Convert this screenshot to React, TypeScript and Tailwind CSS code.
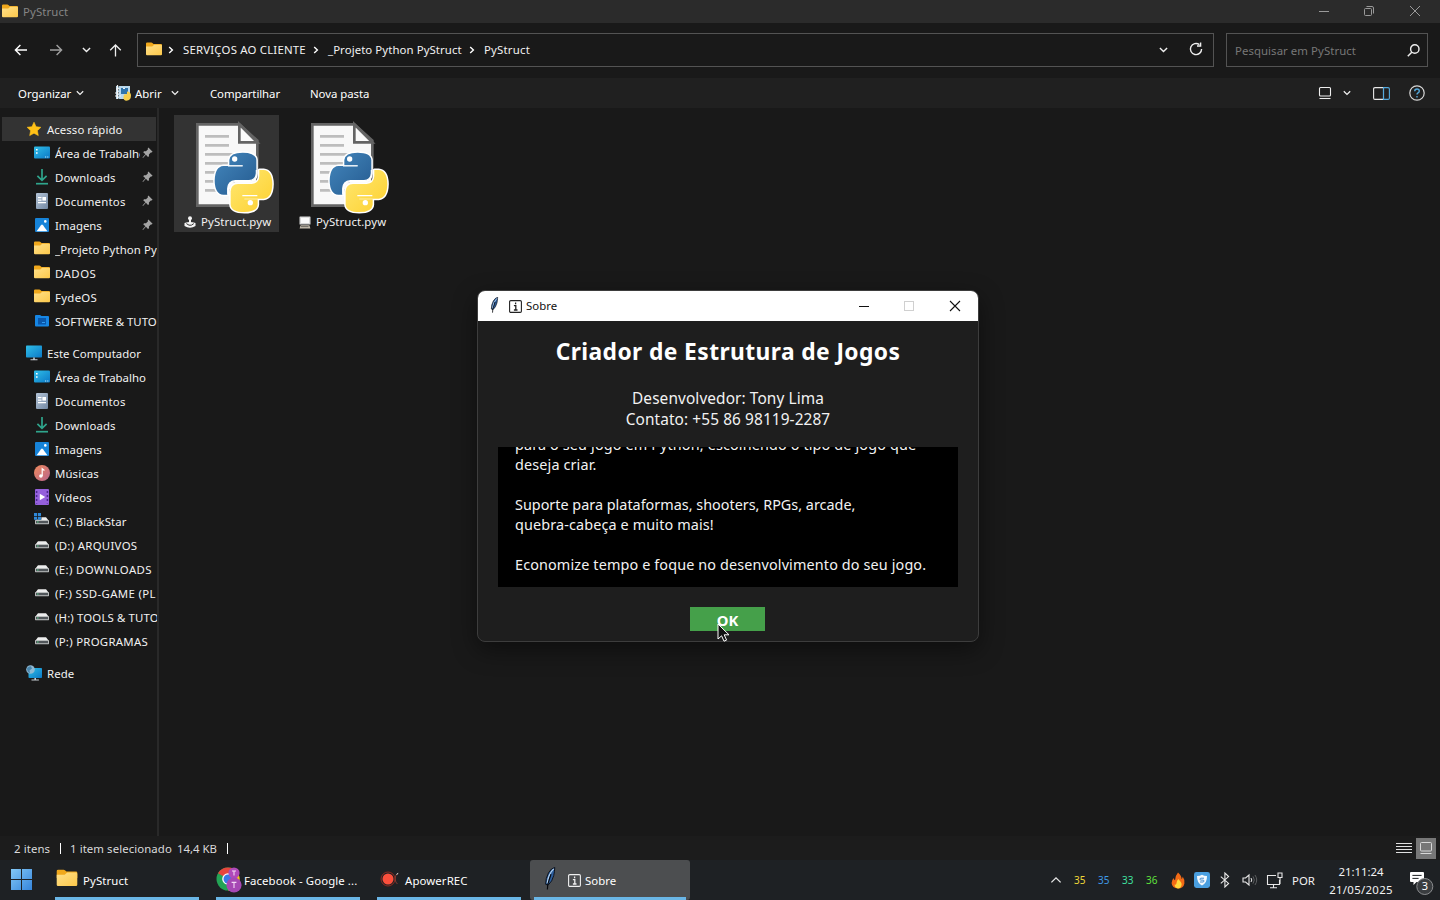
import React from "react";

type P = { children?: React.ReactNode; w: number; h: number; vb?: string; className?: string };
const Svg = ({ children, w, h, vb, className = "" }: P) => (
  <svg width={w} height={h} viewBox={vb ?? `0 0 ${w} ${h}`} fill="none" className={`shrink-0 ${className}`}>
    {children}
  </svg>
);

const Folder = ({ w = 16, h = 14 }: { w?: number; h?: number }) => (
  <Svg w={w} h={h} vb="0 0 16 14" className="mb-[2px]">
    <defs>
      <linearGradient id="fold" x1="0" y1="0" x2="1" y2="1">
        <stop offset="0" stopColor="#ffe08a" />
        <stop offset="1" stopColor="#fcc84a" />
      </linearGradient>
    </defs>
    <path d="M0 1.6Q0 .5 1.1.5H5.4Q6 .5 6.4.9L7.6 2H15Q16 2 16 3V7H0Z" fill="#f0a81c" />
    <path d="M0 4.4H6.2L8.2 2.8H15Q16 2.8 16 3.8V12.2Q16 13.3 15 13.3H1Q0 13.3 0 12.2Z" fill="url(#fold)" />
  </Svg>
);

const Chevron = ({ w = 9, className = "" }: { w?: number; className?: string }) => (
  <Svg w={w} h={6} vb="0 0 9 6" className={className}>
    <path d="M.9 1.1L4.5 4.6L8.1 1.1" stroke="#f0f0f0" strokeWidth="1.4" />
  </Svg>
);

const Crumb = ({ className = "" }: { className?: string }) => (
  <Svg w={6} h={8} className={className}>
    <path d="M1.2 1L4.4 4L1.2 7" stroke="#fff" strokeWidth="1.4" />
  </Svg>
);

const Desktop = () => (
  <Svg w={16} h={16}>
    <defs>
      <linearGradient id="desk" x1="0" y1="0" x2="1" y2="1">
        <stop offset="0" stopColor="#30bfe8" />
        <stop offset="1" stopColor="#0b78c6" />
      </linearGradient>
    </defs>
    <rect x="0" y="1.5" width="16" height="12" rx="1" fill="url(#desk)" />
    <path d="M2 4h1.6v1.6H2zM2 7.2h1.6v1.6H2z" fill="#fff" />
    <path d="M11 12h1.2M13.2 12h1.2" stroke="#bfe6fb" strokeWidth="1" />
  </Svg>
);
const Download = () => (
  <Svg w={16} h={16}>
    <path d="M8 0V11M3.4 6.8L8 11.3L12.6 6.8" stroke="#2fa58c" strokeWidth="1.7" />
    <path d="M2 14.7H14" stroke="#2fa58c" strokeWidth="1.7" />
  </Svg>
);
const Doc = () => (
  <Svg w={16} h={16}>
    <defs>
      <linearGradient id="doc" x1="0" y1="0" x2="1" y2="1">
        <stop offset="0" stopColor="#b5c5d8" />
        <stop offset="1" stopColor="#7388a3" />
      </linearGradient>
    </defs>
    <rect x="2" y="0" width="12" height="16" rx="1" fill="url(#doc)" />
    <path d="M4 4.7H7.5M4 7.2H7.5M4 9.7H12" stroke="#fff" strokeWidth="1.2" />
    <rect x="8.4" y="4" width="3.6" height="3.6" fill="#fff" />
  </Svg>
);
const Picture = () => (
  <Svg w={16} h={16}>
    <rect x="1" y="1" width="14" height="14" rx="1" fill="#1683d8" />
    <path d="M2.6 14.2L7 8.2Q8 7 9 8.2L13.4 14.2Z" fill="#fff" />
    <circle cx="11.3" cy="4.4" r="1.3" fill="#fff" />
  </Svg>
);
const BlueFolder = () => (
  <Svg w={16} h={16}>
    <path d="M1 3Q1 2 2 2H6L7.5 3H14Q15 3 15 4V12.5Q15 13.5 14 13.5H2Q1 13.5 1 12.5Z" fill="#1686e4" />
    <rect x="4" y="5" width="8" height="6.5" fill="#0a57ab" />
    <path d="M8 9.5h3" stroke="#2f9bf0" />
  </Svg>
);
const Monitor = () => (
  <Svg w={16} h={16}>
    <rect x="0" y=".5" width="16" height="12" rx=".8" fill="url(#desk)" />
    <path d="M7.2 12.5h1.6v2H7.2zM4.5 14.3h7v1h-7z" fill="#c5ccd2" />
  </Svg>
);
const Network = () => (
  <Svg w={16} h={16}>
    <rect x="2.5" y="3" width="13.5" height="10" rx=".8" fill="url(#desk)" />
    <path d="M8.4 13h1.6v2H8.4zM5.5 14.6h7.4v1H5.5z" fill="#c5ccd2" />
    <circle cx="4.5" cy="4.5" r="4.3" fill="#8fb9d3" />
    <path d="M1 3Q3 1 5 1.4L6 3.5L3.5 5.5L4 8Q1 7.5 1 3Z" fill="#4b86ad" />
  </Svg>
);
const Music = () => (
  <Svg w={16} h={16}>
    <defs>
      <linearGradient id="mus" x1="0" y1="0" x2="1" y2="1">
        <stop offset="0" stopColor="#f08b5c" />
        <stop offset="1" stopColor="#b8648c" />
      </linearGradient>
    </defs>
    <circle cx="8" cy="8" r="8" fill="url(#mus)" />
    <path d="M8.2 11V3.8L10.4 5.5" stroke="#fff" strokeWidth="1.2" />
    <circle cx="6.9" cy="11" r="1.8" fill="#fff" />
  </Svg>
);
const Video = () => (
  <Svg w={16} h={16}>
    <rect x="1" y="0" width="14" height="16" rx="1" fill="#9560dc" />
    <path d="M2.6 2v12.5M13.4 2v12.5" stroke="#4c2790" strokeWidth="1.5" strokeDasharray="2 2" />
    <path d="M5.8 4.8L11.2 8L5.8 11.2Z" fill="#fff" />
  </Svg>
);
const Drive = ({ win = false }: { win?: boolean }) => (
  <Svg w={16} h={16}>
    <path d="M4 4.2H12L14.6 7.6H1.4Z" fill="#eceded" />
    <rect x="1" y="7" width="14" height="4.2" rx=".6" fill="#b9bcbc" />
    <rect x="2" y="8" width="12" height="2.2" fill="#51565a" />
    <path d="M3 9h1.6" stroke="#59d08a" />
    {win && (
      <g>
        <rect x="-1" y="-1" width="8.4" height="7.6" fill="#191919" />
        <path d="M0 0h3.1v3H0zM3.9 0H7v3H3.9zM0 3.7h3.1v3H0zM3.9 3.7H7v3H3.9z" fill="#2f88d8" />
      </g>
    )}
  </Svg>
);
const Star = () => (
  <Svg w={16} h={16}>
    <path
      d="M8 1.2L10.1 5.7L14.9 6.3L11.4 9.7L12.3 14.6L8 12.2L3.7 14.6L4.6 9.7L1.1 6.3L5.9 5.7Z"
      fill="#ffc117"
      stroke="#ffc117"
      strokeWidth=".6"
      strokeLinejoin="round"
    />
  </Svg>
);
const Pin = () => (
  <Svg w={11} h={12}>
    <path d="M6.4 .6L10.6 4.8L9.6 5.6L8.8 5.4L6.9 7.4L7 9.2L6 10L3.9 7.8L1 10.9L.5 10.4L3.4 7.3L1.2 5.2L2.1 4.2L4 4.2L6 2.3L5.7 1.4Z" fill="#a4a4a4" />
  </Svg>
);

const SnakeHalf = ({ fill, outline }: { fill: string; outline?: boolean }) => (
  <path
    d="M178 166V150Q180 128 218 128Q257 128 259 150V190Q258 211 237 212H196Q174 214 173 236V254H160Q135 252 134 212Q135 170 160 168H218V166Z"
    fill={outline ? "#fff" : fill}
    stroke={outline ? "#fff" : "none"}
    strokeWidth={outline ? 9 : 0}
    strokeLinejoin="round"
  />
);

const PyFile = () => (
  <Svg w={84} h={94} vb="66 30 252 282">
    <defs>
      <linearGradient id="pyb" x1="0" y1="0" x2="1" y2="1">
        <stop offset="0" stopColor="#4487bd" />
        <stop offset="1" stopColor="#245a8f" />
      </linearGradient>
      <linearGradient id="pyy" x1="1" y1="1" x2="0" y2="0">
        <stop offset="0" stopColor="#ffe873" />
        <stop offset="1" stopColor="#fdd02e" />
      </linearGradient>
    </defs>
    <path d="M82 43H208L262 92V287H82Z" fill="#f8f8f8" stroke="#646464" strokeWidth="8" />
    <path d="M208 43V97H262Z" fill="#fafafa" stroke="#646464" strokeWidth="8" />
    <path
      d="M105 79H177M105 106H177M105 133H195M105 160H195M105 187H195M105 214H195M105 241H195"
      stroke="#bdbdbd"
      strokeWidth="8"
    />
    <SnakeHalf fill="" outline />
    <g transform="rotate(180 220.5 217)">
      <SnakeHalf fill="" outline />
    </g>
    <SnakeHalf fill="url(#pyb)" />
    <g transform="rotate(180 220.5 217)">
      <SnakeHalf fill="url(#pyy)" />
    </g>
    <path d="M174 168H218M217 257H262" stroke="#fff" strokeWidth="3.5" />
    <path d="M173 254V236Q174 214 196 212H237Q258 211 259 190V180" stroke="#fff" strokeWidth="3.5" />
    <circle cx="194" cy="147" r="8" fill="#fff" />
    <circle cx="241" cy="278" r="8" fill="#fff" />
  </Svg>
);

const Feather = ({ w, h }: { w: number; h: number }) => (
  <Svg w={w} h={h} vb="0 0 12 24">
    <path d="M11.5 .5Q8 1 5 6Q1.8 12 2 18L4.5 19Q9 15 10.4 9Q11.3 5 11.5 .5Z" fill="#2d5f9e" stroke="#0a0f18" strokeWidth="1" />
    <path d="M10.4 2Q5 7 3.6 17" stroke="#b8d4f0" strokeWidth="1.3" />
    <path d="M7.6 7.5L4.2 18L3.8 23.5" stroke="#07090d" strokeWidth="1.2" />
  </Svg>
);

const InfoBox = ({ color, w = 13 }: { color: string; w?: number }) => (
  <Svg w={w} h={w} vb="0 0 13 13">
    <rect x=".6" y=".6" width="11.8" height="11.8" rx="1.2" stroke={color} strokeWidth="1.1" />
    <path d="M6.6 2.6V4.2M4.9 5.6H6.8V10M4.9 10H8.5" stroke={color} strokeWidth="1.3" />
  </Svg>
);

type Row = { icon: React.ReactNode; label: string; pin?: boolean; cls?: string };
const quick: Row[] = [
  { icon: <Desktop />, label: "Área de Trabalho", pin: true },
  { icon: <Download />, label: "Downloads", pin: true, cls: "tracking-[0.1px]" },
  { icon: <Doc />, label: "Documentos", pin: true, cls: "tracking-[0.24px]" },
  { icon: <Picture />, label: "Imagens", pin: true },
  { icon: <Folder />, label: "_Projeto Python Py", cls: "tracking-[0.1px]" },
  { icon: <Folder />, label: "DADOS", cls: "tracking-[0.5px]" },
  { icon: <Folder />, label: "FydeOS", cls: "tracking-[0.3px]" },
  { icon: <BlueFolder />, label: "SOFTWERE & TUTO" },
];
const computer: Row[] = [
  { icon: <Desktop />, label: "Área de Trabalho" },
  { icon: <Doc />, label: "Documentos", cls: "tracking-[0.24px]" },
  { icon: <Download />, label: "Downloads", cls: "tracking-[0.1px]" },
  { icon: <Picture />, label: "Imagens" },
  { icon: <Music />, label: "Músicas", cls: "tracking-[0.1px]" },
  { icon: <Video />, label: "Vídeos", cls: "tracking-[0.25px]" },
  { icon: <Drive win />, label: "(C:) BlackStar", cls: "tracking-[0.13px]" },
  { icon: <Drive />, label: "(D:) ARQUIVOS", cls: "tracking-[0.3px]" },
  { icon: <Drive />, label: "(E:) DOWNLOADS", cls: "tracking-[0.36px]" },
  { icon: <Drive />, label: "(F:) SSD-GAME (PL", cls: "tracking-[0.36px]" },
  { icon: <Drive />, label: "(H:) TOOLS & TUTO", cls: "tracking-[0.15px]" },
  { icon: <Drive />, label: "(P:) PROGRAMAS", cls: "tracking-[0.28px]" },
];

const Item = ({ icon, label, pin, cls = "" }: Row) => (
  <div className="flex h-6 items-center pl-[34px]">
    {icon}
    <span className={`ml-[5px] overflow-hidden whitespace-nowrap pt-[2px] leading-[22px] ${pin ? "w-[85px]" : "w-[102px]"} ${cls}`}>{label}</span>
    {pin && <span className="ml-[2px]"><Pin /></span>}
  </div>
);
const Head = ({ icon, label, active }: { icon: React.ReactNode; label: string; active?: boolean }) => (
  <div className={`ml-[2px] flex h-6 w-[154px] items-center pl-6 ${active ? "bg-[#333333]" : ""}`}>
    {icon}
    <span className="ml-[5px] whitespace-nowrap pt-[2px] tracking-[0.06px]">{label}</span>
  </div>
);

const Joystick = () => (
  <Svg w={12} h={12}>
    <circle cx="6" cy="2.2" r="2" fill="#f4f4f4" />
    <path d="M6 3V7.5" stroke="#f4f4f4" strokeWidth="2" />
    <path d="M.5 7Q6 5 11.5 7V10Q6 13.6 .5 10Z" fill="#f4f4f4" />
    <path d="M2.4 7.6L5 9.2H7.4L9.8 7.6" stroke="#333" />
  </Svg>
);
const OldPc = () => (
  <Svg w={12} h={13}>
    <rect x=".5" y=".5" width="11" height="8" rx=".6" fill="#d8d8d8" />
    <rect x="2" y="1.8" width="8" height="5.2" fill="#fafafa" />
    <path d="M1.6 9.2H10.4L11.4 12.5H.6Z" fill="#c4bcae" />
    <path d="M2 10.6h7.5" stroke="#6e6a64" />
  </Svg>
);

const Task = ({ icon, label, cls = "", txt = "" }: { icon: React.ReactNode; label: string; cls?: string; txt?: string }) => (
  <div className={`flex h-10 items-center border-b-[3px] border-[#6ab6e6] ${cls}`}>
    {icon}
    <span className={`whitespace-nowrap pt-[5px] text-white ${txt}`}>{label}</span>
  </div>
);

const Chrome = () => (
  <Svg w={27} h={26}>
    <circle cx="12" cy="12" r="11.5" fill="#23a455" />
    <path d="M12 12L2 6.2A11.5 11.5 0 0 1 22 6.2Z" fill="#e8453c" />
    <path d="M12 23.5A11.5 11.5 0 0 0 22 6.2H12L17 15Z" fill="#fbc116" />
    <circle cx="12" cy="12" r="5.8" fill="#fff" />
    <circle cx="12" cy="12" r="4.5" fill="#3b78e7" />
    <circle cx="18" cy="6" r="5.6" fill="#b04aba" />
    <circle cx="18" cy="18" r="7.6" fill="#a648b4" />
    <path d="M16 4h4M18 4v4.4M15.6 15.4h4.8M18 15.4v5.6" stroke="#f3d8f5" strokeWidth="1.1" />
  </Svg>
);

const Rec = () => (
  <Svg w={20} h={18}>
    <circle cx="8" cy="9" r="7" stroke="#a82c20" strokeWidth=".8" />
    <circle cx="8" cy="9" r="5.5" fill="#fb4f3c" />
    <path d="M17.4 3.8Q15 5.4 15.2 9T17.4 14" stroke="#8e3c32" strokeWidth=".9" />
    <path d="M16.5 4.4L18.2 3.4" stroke="#eee" />
  </Svg>
);

const Flame = () => (
  <Svg w={14} h={17}>
    <path d="M7 .5Q11 4 10.4 7Q11.8 6.4 11.7 4.6Q14 8 13.4 11.4Q12.4 16.5 7 16.5Q1 16.4 .6 11Q.6 8.4 2.6 6Q3 8 4 8.2Q4 4 7 .5Z" fill="#f26a16" />
    <path d="M7.2 7Q11 10.4 10.6 12.8Q10 16.4 7 16.4Q3.6 16 3.6 12.6Q5 13 5.4 11.4Q5.6 9 7.2 7Z" fill="#ffd83c" />
  </Svg>
);

export default function App() {
  return (
    <div className="relative flex h-[900px] w-[1440px] flex-col overflow-hidden bg-[#191919] font-['Noto_Sans',sans-serif] text-[11.4px] text-[#f2f2f2]">
      {/* window title bar */}
      <header className="flex h-[23px] items-center bg-[#2b2b2b] pl-[2px] text-[#858585]">
        <Folder />
        <span className="ml-[5px] tracking-[0.1px]">PyStruct</span>
        <div className="ml-auto flex h-full items-center pr-[18px]">
          <Svg w={12} h={12} className="mb-[2px] mr-[33px]">
            <path d="M1 6.5H11" stroke="#9a9a9a" />
          </Svg>
          <Svg w={12} h={12} className="mb-[2px] mr-[33px]">
            <rect x="1.5" y="3.5" width="7" height="7" rx="1" stroke="#9a9a9a" />
            <path d="M3.5 1.5H9Q10.5 1.5 10.5 3V8.5" stroke="#9a9a9a" />
          </Svg>
          <Svg w={14} h={12} className="mb-[2px]">
            <path d="M2 1L12 11M12 1L2 11" stroke="#9a9a9a" />
          </Svg>
        </div>
      </header>

      {/* navigation */}
      <nav className="flex h-[55px] items-start pt-[10px]">
        <div className="flex h-[34px] w-[137px] items-center pl-[14px]">
          <Svg w={14} h={12}>
            <path d="M13 6H1.6M6.4 1L1.4 6L6.4 11" stroke="#fff" strokeWidth="1.4" />
          </Svg>
          <Svg w={14} h={12} className="ml-[21px]">
            <path d="M1 6H12.4M7.6 1L12.6 6L7.6 11" stroke="#a0a0a0" strokeWidth="1.4" />
          </Svg>
          <Chevron w={9} className="ml-[19px]" />
          <Svg w={13} h={13} className="ml-[18px]">
            <path d="M6.5 12.5V1.2M1.2 6.2L6.5 1L11.8 6.2" stroke="#eee" strokeWidth="1.3" />
          </Svg>
        </div>
        <div className="flex h-[34px] w-[1077px] items-center border border-[#535353] pl-2">
          <Folder />
          <Crumb className="ml-[6px]" />
          <span className="ml-[9px] w-[124px] whitespace-nowrap tracking-[0.2px]">SERVIÇOS AO CLIENTE</span>
          <Crumb className="ml-[6px]" />
          <span className="ml-[9px] w-[134px] whitespace-nowrap tracking-[0.08px]">_Projeto Python PyStruct</span>
          <Crumb className="ml-[7px]" />
          <span className="ml-[9px] whitespace-nowrap tracking-[0.2px]">PyStruct</span>
          <Chevron w={9} className="ml-auto" />
          <Svg w={14} h={14} className="mb-[2px] ml-[21px] mr-[10px]">
            <path d="M12.6 7A5.6 5.6 0 1 1 10.4 2.6" stroke="#eee" strokeWidth="1.4" />
            <path d="M11.6 .4V4H8" stroke="#eee" strokeWidth="1.4" />
          </Svg>
        </div>
        <div className="ml-3 flex h-[34px] w-[202px] items-center border border-[#535353] pl-2 text-[#777777]">
          <span className="whitespace-nowrap pt-px tracking-[0.06px]">Pesquisar em PyStruct</span>
          <Svg w={13} h={13} className="ml-auto mr-[7px]">
            <circle cx="7.8" cy="5" r="4.2" stroke="#eee" strokeWidth="1.4" />
            <path d="M4.8 8.2L.8 12.2" stroke="#eee" strokeWidth="1.5" />
          </Svg>
        </div>
      </nav>

      {/* command bar */}
      <div className="flex h-[30px] items-center bg-[#202020] pl-[18px] text-white">
        <span className="w-[53px] pt-[2px]">Organizar</span>
        <Chevron w={8} className="ml-[5px]" />
        <Svg w={16} h={16} className="ml-[31px]">
          <rect x="1" y="1" width="14" height="13" fill="#b9d9ee" />
          <path d="M6 3h7v6H6z" fill="#2f74ab" />
          <path d="M1 4h4M0 8h5M0 11h6M2.5 0v14" stroke="#f2f2f2" strokeWidth="1.2" />
          <path d="M3.6 1v13" stroke="#44505a" strokeWidth=".8" strokeDasharray="1.5 1.5" />
          <path d="M8 3.4h2" stroke="#fff" />
          <path d="M9 9.4L12 9V6.4Q16 6.6 16 10.6Q16 15.4 11.4 15.8Q8.4 15.6 8.4 12.6Z" fill="#f7cf4c" />
        </Svg>
        <span className="ml-[4px] w-[26px] pt-[2px]">Abrir</span>
        <Chevron w={8} className="ml-[10px]" />
        <span className="ml-[31px] w-[70px] pt-[2px] tracking-[-0.08px]">Compartilhar</span>
        <span className="ml-[30px] whitespace-nowrap pt-[2px] tracking-[-0.05px]">Nova pasta</span>
        <div className="ml-auto flex items-center pr-[15px]">
          <Svg w={14} h={14}>
            <rect x="1.5" y="1.5" width="11" height="8.5" rx="1" stroke="#eee" strokeWidth="1.1" />
            <path d="M1.5 12.5H12.5" stroke="#eee" strokeWidth="1.1" />
          </Svg>
          <Chevron w={8} className="ml-[11px]" />
          <Svg w={17} h={13} className="ml-[22px]">
            <path d="M10.5 .6H2Q.6 .6 .6 2V11Q.6 12.4 2 12.4H10.5Z" stroke="#e8e8e8" strokeWidth="1.1" />
            <path d="M10.5 .6H15Q16.4 .6 16.4 2V11Q16.4 12.4 15 12.4H10.5Z" stroke="#54a9dd" strokeWidth="1.1" />
          </Svg>
          <Svg w={16} h={16} className="ml-[19px]">
            <circle cx="8" cy="8" r="7.2" stroke="#d8d8d8" strokeWidth="1.2" />
            <path d="M5.7 6.2Q5.8 4 8 4T10.3 6Q10.3 7.2 9 7.8Q8 8.4 8 9.6M8 11V12.4" stroke="#54a9dd" strokeWidth="1.4" />
          </Svg>
        </div>
      </div>

      {/* content */}
      <main className="flex h-[728px]">
        <aside className="w-[159px] border-r-2 border-[#292929] pt-[9px]">
          <Head icon={<Star />} label="Acesso rápido" active />
          {quick.map((r) => <Item key={r.label} {...r} />)}
          <div className="h-2" />
          <Head icon={<Monitor />} label="Este Computador" />
          {computer.map((r) => <Item key={r.label} {...r} />)}
          <div className="h-2" />
          <Head icon={<Network />} label="Rede" />
        </aside>
        <section className="flex items-start pt-[7px]">
          <div className="ml-[15px] flex h-[117px] w-[105px] flex-col bg-[#333333] pl-[18px] pt-[5px]">
            <PyFile />
            <div className="-ml-[8px] flex items-center">
              <Joystick />
              <span className="ml-[5px] leading-4 tracking-[0.1px]">PyStruct.pyw</span>
            </div>
          </div>
          <div className="ml-[10px] flex h-[117px] w-[105px] flex-col pl-[18px] pt-[5px]">
            <PyFile />
            <div className="-ml-[8px] flex items-center">
              <OldPc />
              <span className="ml-[5px] leading-4 tracking-[0.1px]">PyStruct.pyw</span>
            </div>
          </div>
        </section>
      </main>

      {/* status bar */}
      <footer className="flex h-6 items-center bg-[#1c1c1c] pl-[14px] text-[#dadada]">
        <span className="w-[46px] pt-[2px] tracking-[0.1px]">2 itens</span>
        <span className="h-[11px] w-px bg-white" />
        <span className="ml-[9px] w-[107px] whitespace-nowrap pt-[2px] tracking-[0.08px]">1 item selecionado</span>
        <span className="w-[50px] whitespace-nowrap pt-[2px]">14,4 KB</span>
        <span className="h-[11px] w-px bg-white" />
        <div className="ml-auto flex items-center pr-[4px]">
          <Svg w={16} h={12}>
            <path d="M0 1.5H16M0 4.5H16M0 7.5H16M0 10.5H16" stroke="#e0e0e0" />
          </Svg>
          <div className="ml-1 flex h-[21px] w-[20px] items-center justify-center bg-[#777777]">
            <Svg w={14} h={14}>
              <rect x="1.5" y="1.5" width="11" height="8.5" rx="1" stroke="#d8d8d8" />
              <path d="M1.5 12.5H12.5" stroke="#d8d8d8" />
            </Svg>
          </div>
        </div>
      </footer>

      {/* taskbar */}
      <div className="flex h-10 bg-[#1e2124]">
        <div className="flex w-[55px] items-center pl-[11px]">
          <Svg w={21} h={21} className="mb-[2px]">
            <defs>
              <linearGradient id="win" x1="0" y1="0" x2="21" y2="21" gradientUnits="userSpaceOnUse">
                <stop offset="0" stopColor="#84c8f6" />
                <stop offset="1" stopColor="#3585dc" />
              </linearGradient>
            </defs>
            <path d="M0 0H10V10H0ZM11 0H21V10H11ZM0 11H10V21H0ZM11 11H21V21H11Z" fill="url(#win)" />
          </Svg>
        </div>
        <Task cls="w-[144px] pl-[1px]" icon={<Folder w={22} h={18} />} label="PyStruct" txt="ml-[5px] tracking-[0.1px]" />
        <Task cls="ml-[17px] w-[144px]" icon={<span className="pt-[3px]"><Chrome /></span>} label="Facebook - Google ..." txt="ml-[1px] tracking-[0.1px]" />
        <Task cls="ml-[17px] w-[144px] pl-[3px]" icon={<span className="pt-px"><Rec /></span>} label="ApowerREC" txt="ml-[5px] tracking-[0.1px]" />
        <div className="ml-[9px] w-[160px] rounded-[3px] bg-[#4c4e50] px-1">
          <Task cls="w-[152px] pl-[9px]" icon={<><Feather w={13} h={23} /><span className="ml-[12px] pt-[4px]"><InfoBox color="#f0f0f0" /></span></>} label="Sobre" txt="ml-[4px]" />
        </div>
        <div className="ml-auto flex items-center">
          <Svg w={12} h={8}>
            <path d="M1.4 6.4L6 1.8L10.6 6.4" stroke="#e8e8e8" strokeWidth="1.3" />
          </Svg>
          <div className="ml-[12px] flex gap-[12px] pb-px text-[10px] leading-none">
            <span className="w-3 text-[#f0d838]">35</span>
            <span className="w-3 text-[#3f9ae8]">35</span>
            <span className="w-3 text-[#3fe0a0]">33</span>
            <span className="w-3 text-[#5fe03c]">36</span>
          </div>
          <div className="ml-[13px]"><Flame /></div>
          <Svg w={16} h={16} className="ml-[9px]">
            <rect width="16" height="16" rx="2.4" fill="#4a9fe0" />
            <path d="M3 4Q6 4 8 2.8Q10 4 13 4Q13.2 11 8 13.4Q2.8 11 3 4Z" fill="#f4f9fd" />
            <path d="M10 6.2H7Q6 6.2 6 7.2T7 8.1H9Q10 8.2 10 9T9 10H6" stroke="#4a8fce" />
          </Svg>
          <Svg w={10} h={16} className="ml-[10px]">
            <path d="M.8 4.6L8.6 11.4L4.9 15V1L8.6 4.6L.8 11.4" stroke="#e8e8e8" strokeWidth="1.1" />
          </Svg>
          <Svg w={16} h={14} className="ml-[12px]">
            <path d="M1 5H3.6L7 2V12L3.6 9H1Z" stroke="#e8e8e8" strokeWidth="1.1" />
            <path d="M9 5Q10.6 7 9 9" stroke="#e8e8e8" />
            <path d="M11 3.4Q13.6 7 11 10.6M13 2Q16.4 7 13 12" stroke="#5c5e60" />
          </Svg>
          <Svg w={17} h={17} className="ml-[8px]">
            <path d="M10 3.5H1.5V12.5H13.5V8M7.5 12.5V15.5M4 15.8H11" stroke="#e8e8e8" strokeWidth="1.1" />
            <path d="M12 1H16V5.5H12ZM14 5.5V12" stroke="#e8e8e8" strokeWidth="1.1" />
          </Svg>
          <span className="ml-[9px] w-[24px] pt-[2px]">POR</span>
          <div className="ml-[12px] w-[66px] whitespace-nowrap pt-[1px] text-center leading-[18px]">
            <div>21:11:24</div>
            <div className="tracking-[0.3px]">21/05/2025</div>
          </div>
          <div className="ml-[15px] mr-[6px] pt-[3px]">
            <Svg w={25} h={26}>
              <path d="M2 3H14Q15 3 15 4V12Q15 13 14 13H7.5L4.5 16V13H2Q1 13 1 12V4Q1 3 2 3Z" fill="#fff" />
              <path d="M3.4 6.4H12.6M3.4 9.4H9.6" stroke="#1e2124" />
              <circle cx="15.8" cy="17.5" r="8" fill="#3a3d40" stroke="#8a8c8e" />
              <text x="15.8" y="21.4" textAnchor="middle" fontSize="11" fill="#fff">3</text>
            </Svg>
          </div>
        </div>
      </div>

      {/* about window */}
      <div className="absolute left-[477px] top-[290px] flex h-[352px] w-[502px] flex-col overflow-hidden rounded-lg border border-[#3d3d3d] bg-[#1e1e1e] shadow-[0_8px_24px_rgba(0,0,0,0.45)]">
        <div className="flex h-[30px] shrink-0 items-center bg-white pl-[10px] text-[#111]">
          <span className="pb-[2px]"><Feather w={12} h={16} /></span>
          <span className="ml-[9px]"><InfoBox color="#222" /></span>
          <span className="ml-[4px]">Sobre</span>
          <div className="ml-auto flex items-center pb-px pr-[16px]">
            <Svg w={12} h={12}><path d="M1 6.5H11" stroke="#111" strokeWidth="1.1" /></Svg>
            <Svg w={12} h={12} className="ml-[33px]"><rect x="1.5" y="1.5" width="9" height="9" stroke="#d0d0d0" /></Svg>
            <Svg w={14} h={12} className="ml-[33px]"><path d="M2 1L12 11M12 1L2 11" stroke="#111" strokeWidth="1.1" /></Svg>
          </div>
        </div>
        <h1 className="mt-[15px] whitespace-nowrap text-center text-[22.8px] font-bold leading-8 tracking-[0.4px] text-white">Criador de Estrutura de Jogos</h1>
        <div className="mt-[20px] text-center text-[15.4px] leading-[21px] tracking-[0.1px]">
          <div>Desenvolvedor: Tony Lima</div>
          <div>Contato: +55 86 98119-2287</div>
        </div>
        <div className="mx-5 mt-[17px] flex h-[140px] shrink-0 flex-col justify-end overflow-hidden bg-black pb-[12px] pl-[17px] text-[14.4px] leading-5">
          <p className="whitespace-nowrap tracking-[0.14px]">para o seu jogo em Python, escolhendo o tipo de jogo que<br />deseja criar.</p>
          <p className="mt-5 whitespace-nowrap">Suporte para plataformas, shooters, RPGs, arcade,<br /><span className="tracking-[0.13px]">quebra-cabeça e muito mais!</span></p>
          <p className="mt-5 whitespace-nowrap tracking-[0.13px]">Economize tempo e foque no desenvolvimento do seu jogo.</p>
        </div>
        <button className="ml-[212px] mt-5 flex h-6 w-[75px] shrink-0 items-center justify-center bg-[#45a04a] pt-[3px] text-[14.8px] font-bold text-white">OK</button>
      </div>
      <Svg w={13} h={19} className="absolute left-[717px] top-[623px]">
        <path d="M1 1V16L4.6 12.8L7 18.2L9.6 17.1L7.2 11.8H12Z" fill="#111" stroke="#fff" />
      </Svg>
    </div>
  );
}
